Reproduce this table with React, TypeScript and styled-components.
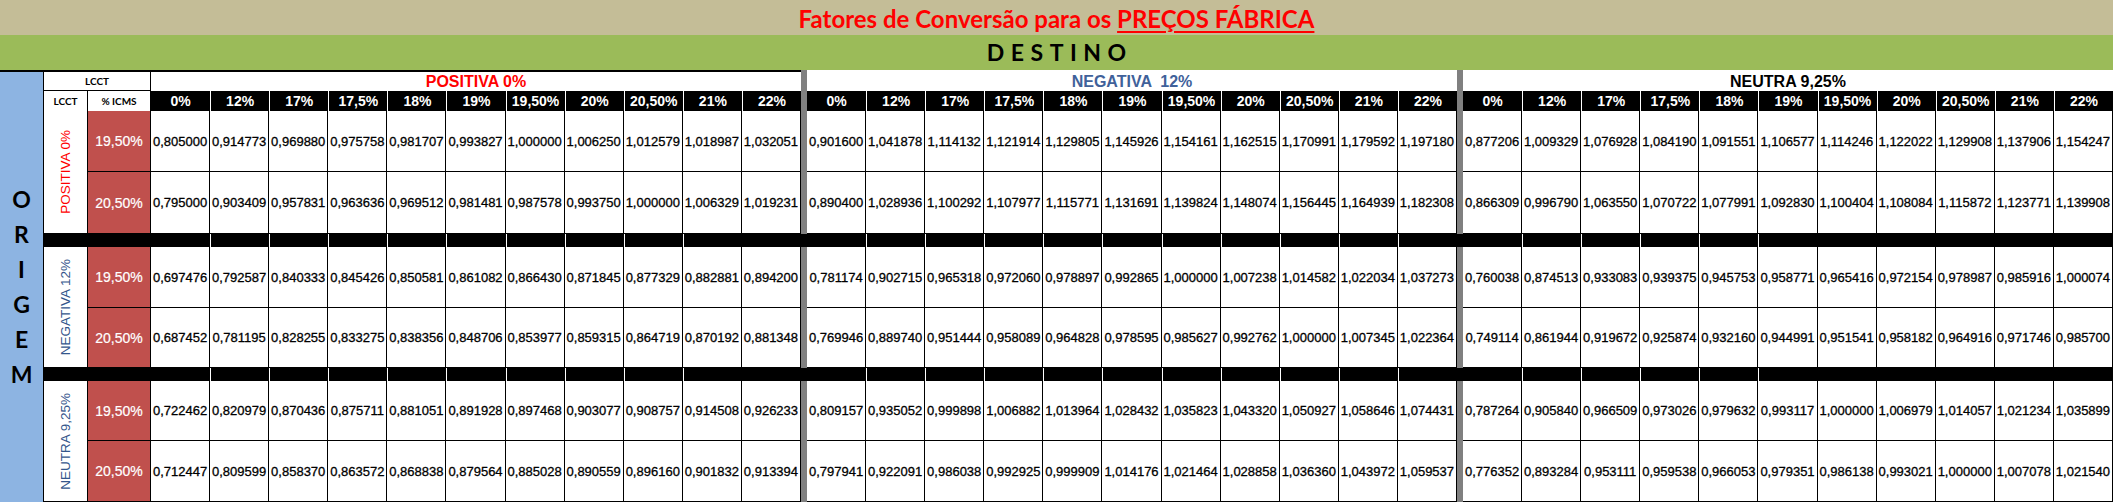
import React from "react";
import styled, { createGlobalStyle } from "styled-components";

const GlobalStyle = createGlobalStyle`
  html, body { margin: 0; padding: 0; background: #ffffff; }
  body { font-family: "Liberation Sans", Arial, sans-serif; }
`;

const Page = styled.div`
  width: 2113px;
  display: flex;
  flex-direction: column;
`;

const TitleBar = styled.div`
  height: 35px;
  box-sizing: border-box;
  padding-top: 2px;
  background: #c4bd97;
  text-align: center;
  font-family: Lato, "Liberation Sans", sans-serif;
  font-weight: 700;
  font-size: 24px;
  line-height: 33px;
  color: #ff0000;
  white-space: nowrap;
`;

const Underlined = styled.span`
  text-decoration: underline;
  text-decoration-thickness: 2px;
  text-underline-offset: 3px;
`;

const DestinoBar = styled.div`
  height: 35px;
  background: #9bbb59;
  text-align: center;
  font-family: Lato, "Liberation Sans", sans-serif;
  font-weight: 700;
  font-size: 23px;
  line-height: 35px;
  letter-spacing: 6.5px;
  padding-left: 6.5px;
  color: #000;
`;

const Table = styled.div`
  display: grid;
  grid-template-columns: 44px 44px 63px repeat(11, 1fr) 6px repeat(11, 1fr) 6px repeat(11, 1fr);
  grid-template-rows: 21px 20px 61px 62px 13px 61px 60px 13px 60px 61px;
`;

const Cell = styled.div<{ $col: string; $row: string }>`
  grid-column: ${(p) => p.$col};
  grid-row: ${(p) => p.$row};
  box-sizing: border-box;
  display: flex;
  align-items: center;
  justify-content: center;
  min-width: 0;
  overflow: hidden;
  white-space: pre;
`;

const OrigemCell = styled(Cell)`
  background: #8db4e2;
  border-top: 2px solid #000;
  border-right: 1px solid #000;
  flex-direction: column;
`;

const OrigemLetter = styled.span`
  font-family: Lato, "Liberation Sans", sans-serif;
  font-weight: 700;
  font-size: 23px;
  line-height: 35px;
  color: #000;
`;

const LcctTop = styled(Cell)`
  background: #fff;
  border-top: 2px solid #000;
  border-right: 1px solid #000;
  border-bottom: 1px solid #000;
  font-family: Lato, "Liberation Sans", sans-serif;
  font-weight: 700;
  font-size: 10px;
  color: #000;
`;

const GroupHeader = styled(Cell)<{ $color: string; $top?: boolean }>`
  background: #fff;
  border-top: ${(p) => (p.$top ? "2px solid #000" : "none")};
  font-weight: 700;
  font-size: 16px;
  color: ${(p) => p.$color};
  padding-top: ${(p) => (p.$top ? "0" : "2px")};
`;

const GrayBar = styled(Cell)`
  background: #808080;
`;

const SubLabel = styled(Cell)`
  background: #fff;
  border-right: 1px solid #000;
  font-family: Lato, "Liberation Sans", sans-serif;
  font-weight: 700;
  font-size: 10px;
  color: #000;
`;

const ColHead = styled(Cell)<{ $line: boolean }>`
  background: #000;
  border-left: ${(p) => (p.$line ? "1px solid #fff" : "none")};
  color: #fff;
  font-weight: 700;
  font-size: 14px;
`;

const OriginLabelCell = styled(Cell)`
  background: #fff;
  border-right: 1px solid #000;
  border-bottom: 1px solid #000;
`;

const OriginLabelText = styled.span<{ $color: string }>`
  writing-mode: vertical-rl;
  transform: rotate(180deg);
  font-size: 13.5px;
  color: ${(p) => p.$color};
  white-space: nowrap;
`;

const IcmsCell = styled(Cell)`
  background: #c0504d;
  border-right: 1px solid #000;
  border-bottom: 1px solid #000;
  color: #fff;
  font-size: 14px;
  -webkit-text-stroke: 0.2px #fff;
`;

const ValueCell = styled(Cell)`
  background: #fff;
  border-right: 1px solid #000;
  border-bottom: 1px solid #000;
  color: #000;
  font-size: 13px;
  -webkit-text-stroke: 0.3px #000;
`;

const SepCell = styled(Cell)<{ $line: boolean }>`
  background: #000;
  border-left: ${(p) => (p.$line ? "1px solid #fff" : "none")};
`;

const RATES = ["0%", "12%", "17%", "17,5%", "18%", "19%", "19,50%", "20%", "20,50%", "21%", "22%"];

type Group = { name: string; color: string; rot: string; rotColor: string };

const GROUPS: Group[] = [
  { name: "POSITIVA 0%", color: "#ff0000", rot: "POSITIVA 0%", rotColor: "#ff0000" },
  { name: "NEGATIVA  12%", color: "#40619a", rot: "NEGATIVA 12%", rotColor: "#34568b" },
  { name: "NEUTRA 9,25%", color: "#000000", rot: "NEUTRA 9,25%", rotColor: "#34568b" },
];

// data[origin][icmsRow] = 33 values (positiva, negativa, neutra destinations)
const DATA: string[][][] = [
  [
    "0,805000 0,914773 0,969880 0,975758 0,981707 0,993827 1,000000 1,006250 1,012579 1,018987 1,032051 0,901600 1,041878 1,114132 1,121914 1,129805 1,145926 1,154161 1,162515 1,170991 1,179592 1,197180 0,877206 1,009329 1,076928 1,084190 1,091551 1,106577 1,114246 1,122022 1,129908 1,137906 1,154247".split(" "),
    "0,795000 0,903409 0,957831 0,963636 0,969512 0,981481 0,987578 0,993750 1,000000 1,006329 1,019231 0,890400 1,028936 1,100292 1,107977 1,115771 1,131691 1,139824 1,148074 1,156445 1,164939 1,182308 0,866309 0,996790 1,063550 1,070722 1,077991 1,092830 1,100404 1,108084 1,115872 1,123771 1,139908".split(" "),
  ],
  [
    "0,697476 0,792587 0,840333 0,845426 0,850581 0,861082 0,866430 0,871845 0,877329 0,882881 0,894200 0,781174 0,902715 0,965318 0,972060 0,978897 0,992865 1,000000 1,007238 1,014582 1,022034 1,037273 0,760038 0,874513 0,933083 0,939375 0,945753 0,958771 0,965416 0,972154 0,978987 0,985916 1,000074".split(" "),
    "0,687452 0,781195 0,828255 0,833275 0,838356 0,848706 0,853977 0,859315 0,864719 0,870192 0,881348 0,769946 0,889740 0,951444 0,958089 0,964828 0,978595 0,985627 0,992762 1,000000 1,007345 1,022364 0,749114 0,861944 0,919672 0,925874 0,932160 0,944991 0,951541 0,958182 0,964916 0,971746 0,985700".split(" "),
  ],
  [
    "0,722462 0,820979 0,870436 0,875711 0,881051 0,891928 0,897468 0,903077 0,908757 0,914508 0,926233 0,809157 0,935052 0,999898 1,006882 1,013964 1,028432 1,035823 1,043320 1,050927 1,058646 1,074431 0,787264 0,905840 0,966509 0,973026 0,979632 0,993117 1,000000 1,006979 1,014057 1,021234 1,035899".split(" "),
    "0,712447 0,809599 0,858370 0,863572 0,868838 0,879564 0,885028 0,890559 0,896160 0,901832 0,913394 0,797941 0,922091 0,986038 0,992925 0,999909 1,014176 1,021464 1,028858 1,036360 1,043972 1,059537 0,776352 0,893284 0,953111 0,959538 0,966053 0,979351 0,986138 0,993021 1,000000 1,007078 1,021540".split(" "),
  ],
];

const ICMS = ["19,50%", "20,50%"];
const groupStart = (g: number) => 4 + g * 12; // first grid column of each group
const ORIGIN_ROWS = [3, 6, 9]; // first grid row of each origin block
const SEP_ROWS = [5, 8];

const sepLine = (g: number, k: number) => {
  if (k === 0) return false;
  if (g === 0) return k <= 9;
  if (g === 1) return true;
  return k <= 5;
};

export default function App() {
  const cells: React.ReactNode[] = [];

  // header rows
  GROUPS.forEach((g, gi) => {
    const s = groupStart(gi);
    cells.push(
      <GroupHeader key={`gh${gi}`} $col={`${s} / span 11`} $row="1" $color={g.color} $top={gi === 0}>
        {g.name}
      </GroupHeader>
    );
    RATES.forEach((r, k) => {
      cells.push(
        <ColHead key={`ch${gi}-${k}`} $col={`${s + k}`} $row="2" $line={k > 0}>
          {r}
        </ColHead>
      );
    });
  });

  // gray separators
  [15, 27].forEach((c) => {
    ["1 / 5", "6 / 8", "9 / 11"].forEach((rr) => {
      cells.push(<GrayBar key={`gb${c}-${rr}`} $col={`${c}`} $row={rr} />);
    });
  });

  // separator rows
  SEP_ROWS.forEach((r) => {
    cells.push(<SepCell key={`sl${r}`} $col="2 / 4" $row={`${r}`} $line={false} />);
    GROUPS.forEach((_, gi) => {
      for (let k = 0; k < 11; k++) {
        cells.push(
          <SepCell key={`s${r}-${gi}-${k}`} $col={`${groupStart(gi) + k}`} $row={`${r}`} $line={sepLine(gi, k)} />
        );
      }
    });
    cells.push(<SepCell key={`sg1${r}`} $col="15" $row={`${r}`} $line={false} />);
    cells.push(<SepCell key={`sg2${r}`} $col="27" $row={`${r}`} $line={false} />);
  });

  // data blocks
  GROUPS.forEach((g, oi) => {
    const r0 = ORIGIN_ROWS[oi];
    cells.push(
      <OriginLabelCell key={`ol${oi}`} $col="2" $row={`${r0} / span 2`}>
        <OriginLabelText $color={g.rotColor}>{g.rot}</OriginLabelText>
      </OriginLabelCell>
    );
    ICMS.forEach((ic, ri) => {
      const row = r0 + ri;
      cells.push(
        <IcmsCell key={`ic${oi}-${ri}`} $col="3" $row={`${row}`}>
          {ic}
        </IcmsCell>
      );
      DATA[oi][ri].forEach((v, i) => {
        const gi = Math.floor(i / 11);
        const k = i % 11;
        cells.push(
          <ValueCell key={`v${oi}-${ri}-${i}`} $col={`${groupStart(gi) + k}`} $row={`${row}`}>
            {v}
          </ValueCell>
        );
      });
    });
  });

  return (
    <>
      <GlobalStyle />
      <Page>
        <TitleBar>
          Fatores de Conversão para os <Underlined>PREÇOS FÁBRICA</Underlined>
        </TitleBar>
        <DestinoBar>DESTINO</DestinoBar>
        <Table>
          <OrigemCell $col="1" $row="1 / -1">
            {"ORIGEM".split("").map((l, i) => (
              <OrigemLetter key={i}>{l}</OrigemLetter>
            ))}
          </OrigemCell>
          <LcctTop $col="2 / 4" $row="1">LCCT</LcctTop>
          <SubLabel $col="2" $row="2">LCCT</SubLabel>
          <SubLabel $col="3" $row="2">% ICMS</SubLabel>
          {cells}
        </Table>
      </Page>
    </>
  );
}
